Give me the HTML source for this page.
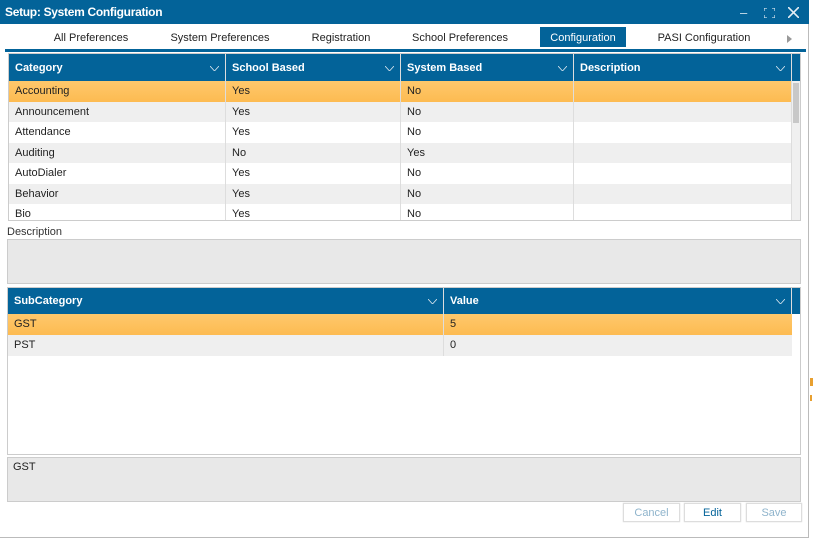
<!DOCTYPE html>
<html><head><meta charset="utf-8"><style>
*{margin:0;padding:0;box-sizing:border-box}
body{width:813px;height:539px;background:#fff;font-family:"Liberation Sans",sans-serif;font-size:11px;color:#222;position:relative;overflow:hidden}
.a{position:absolute}
.win{left:0;top:0;width:809px;height:538px;border-right:1px solid #bbb;border-bottom:1px solid #bbb}
.title{left:0;top:0;width:809px;height:24px;background:#036399;color:#fff;font-weight:bold;font-size:12px;line-height:25px;padding-left:5px;letter-spacing:-0.3px}
.tab{top:27px;height:20px;line-height:23px;font-size:11px;color:#222;text-align:center}
.grid{border:1px solid #ccc;background:#fff;overflow:hidden}
.hd{background:#036399;color:#fff;font-weight:bold;position:absolute;top:0}
.hc{position:absolute;top:0;height:100%;border-right:1px solid #ddd;padding-left:6px;display:flex;align-items:center}
.hc svg{position:absolute;right:6px;top:50%;margin-top:-2px}
.row{position:absolute;left:0;height:20.5px}
.c{position:absolute;top:0;height:100%;border-right:1px solid #ddd;padding-left:6px;line-height:21px}
.sel{background:linear-gradient(#fec86c,#fdbb51)}
.alt{background:#efefef}
.box{background:#e8e8e8;border:1px solid #ccc}
.btn{top:503px;height:19px;border:1px solid #ddd;background:#fff;text-align:center;line-height:18px;font-size:11px;box-shadow:0 0 1px #ccc}
</style></head><body>
<div class="a win"></div>
<div class="a title">Setup: System Configuration</div>
<div class="a" style="left:740px;top:7px;color:#cfe0ec;font-size:13px;line-height:12px">&#8211;</div>
<svg class="a" style="left:764px;top:8px" width="11" height="10"><path d="M0 3V0H3M8 0H11V3M11 7V10H8M3 10H0V7" stroke="#cfe0ec" fill="none" stroke-width="1.3"/></svg>
<svg class="a" style="left:788px;top:7px" width="11" height="11"><path d="M0 0L11 11M11 0L0 11" stroke="#e6eef4" stroke-width="1.6"/></svg>
<div class="a tab" style="left:48px;width:86px">All Preferences</div>
<div class="a tab" style="left:165px;width:110px">System Preferences</div>
<div class="a tab" style="left:305px;width:72px">Registration</div>
<div class="a tab" style="left:405px;width:110px">School Preferences</div>
<div class="a tab" style="left:540px;width:86px;background:#036399;color:#fff">Configuration</div>
<div class="a tab" style="left:650px;width:108px">PASI Configuration</div>
<div class="a" style="left:787px;top:35px;width:0;height:0;border-left:5px solid #999;border-top:4px solid transparent;border-bottom:4px solid transparent"></div>
<div class="a" style="left:5px;top:49px;width:801px;height:3px;background:#036399"></div>

<div class="a grid" style="left:8px;top:53px;width:793px;height:168px">
 <div class="hd" style="left:0;width:791px;height:27px">
  <div class="hc" style="left:0;width:217px">Category<svg width="9" height="5"><path d="M0 0L4.5 5L9 0" stroke="#dde8f0" fill="none" stroke-width=".8"/></svg></div>
  <div class="hc" style="left:217px;width:175px">School Based<svg width="9" height="5"><path d="M0 0L4.5 5L9 0" stroke="#dde8f0" fill="none" stroke-width=".8"/></svg></div>
  <div class="hc" style="left:392px;width:173px">System Based<svg width="9" height="5"><path d="M0 0L4.5 5L9 0" stroke="#dde8f0" fill="none" stroke-width=".8"/></svg></div>
  <div class="hc" style="left:565px;width:218px">Description<svg width="9" height="5"><path d="M0 0L4.5 5L9 0" stroke="#dde8f0" fill="none" stroke-width=".8"/></svg></div>
 </div>
 <div class="a" style="left:783px;top:27px;width:8px;height:140px;background:#f0f0f0"><div style="margin:2px 0 0 1px;width:6px;height:40px;background:#c8c8c8"></div></div>
 <div class="row sel" style="top:27px;width:783px"><div class="c" style="left:0;width:217px">Accounting</div><div class="c" style="left:217px;width:175px">Yes</div><div class="c" style="left:392px;width:173px">No</div><div class="c" style="left:565px;width:218px"></div></div>
 <div class="row alt" style="top:47.5px;width:783px"><div class="c" style="left:0;width:217px">Announcement</div><div class="c" style="left:217px;width:175px">Yes</div><div class="c" style="left:392px;width:173px">No</div><div class="c" style="left:565px;width:218px"></div></div>
 <div class="row" style="top:68px;width:783px"><div class="c" style="left:0;width:217px">Attendance</div><div class="c" style="left:217px;width:175px">Yes</div><div class="c" style="left:392px;width:173px">No</div><div class="c" style="left:565px;width:218px"></div></div>
 <div class="row alt" style="top:88.5px;width:783px"><div class="c" style="left:0;width:217px">Auditing</div><div class="c" style="left:217px;width:175px">No</div><div class="c" style="left:392px;width:173px">Yes</div><div class="c" style="left:565px;width:218px"></div></div>
 <div class="row" style="top:109px;width:783px"><div class="c" style="left:0;width:217px">AutoDialer</div><div class="c" style="left:217px;width:175px">Yes</div><div class="c" style="left:392px;width:173px">No</div><div class="c" style="left:565px;width:218px"></div></div>
 <div class="row alt" style="top:129.5px;width:783px"><div class="c" style="left:0;width:217px">Behavior</div><div class="c" style="left:217px;width:175px">Yes</div><div class="c" style="left:392px;width:173px">No</div><div class="c" style="left:565px;width:218px"></div></div>
 <div class="row" style="top:150px;width:783px"><div class="c" style="left:0;width:217px">Bio</div><div class="c" style="left:217px;width:175px">Yes</div><div class="c" style="left:392px;width:173px">No</div><div class="c" style="left:565px;width:218px"></div></div>
</div>

<div class="a" style="left:7px;top:226px;color:#333">Description</div>
<div class="a box" style="left:7px;top:239px;width:794px;height:45px"></div>

<div class="a grid" style="left:7px;top:287px;width:794px;height:168px">
 <div class="hd" style="left:0;width:792px;height:26px">
  <div class="hc" style="left:0;width:436px">SubCategory<svg width="9" height="5"><path d="M0 0L4.5 5L9 0" stroke="#dde8f0" fill="none" stroke-width=".8"/></svg></div>
  <div class="hc" style="left:436px;width:348px">Value<svg width="9" height="5"><path d="M0 0L4.5 5L9 0" stroke="#dde8f0" fill="none" stroke-width=".8"/></svg></div>
 </div>
 <div class="row sel" style="top:26px;width:784px;height:21px"><div class="c" style="left:0;width:436px">GST</div><div class="c" style="left:436px;width:348px;border:0">5</div></div>
 <div class="row alt" style="top:47px;width:784px"><div class="c" style="left:0;width:436px">PST</div><div class="c" style="left:436px;width:348px;border:0">0</div></div>
</div>

<div class="a box" style="left:7px;top:457px;width:794px;height:45px;padding:3px 0 0 5px">GST</div>
<div class="a btn" style="left:623px;width:57px;color:#8fb4cc">Cancel</div>
<div class="a btn" style="left:684px;width:57px;color:#036399">Edit</div>
<div class="a btn" style="left:746px;width:56px;color:#8fb4cc">Save</div>
<div class="a" style="left:810px;top:378px;width:3px;height:8px;background:#e8a030"></div>
<div class="a" style="left:810px;top:395px;width:2px;height:6px;background:#e8a030"></div>
</body></html>
